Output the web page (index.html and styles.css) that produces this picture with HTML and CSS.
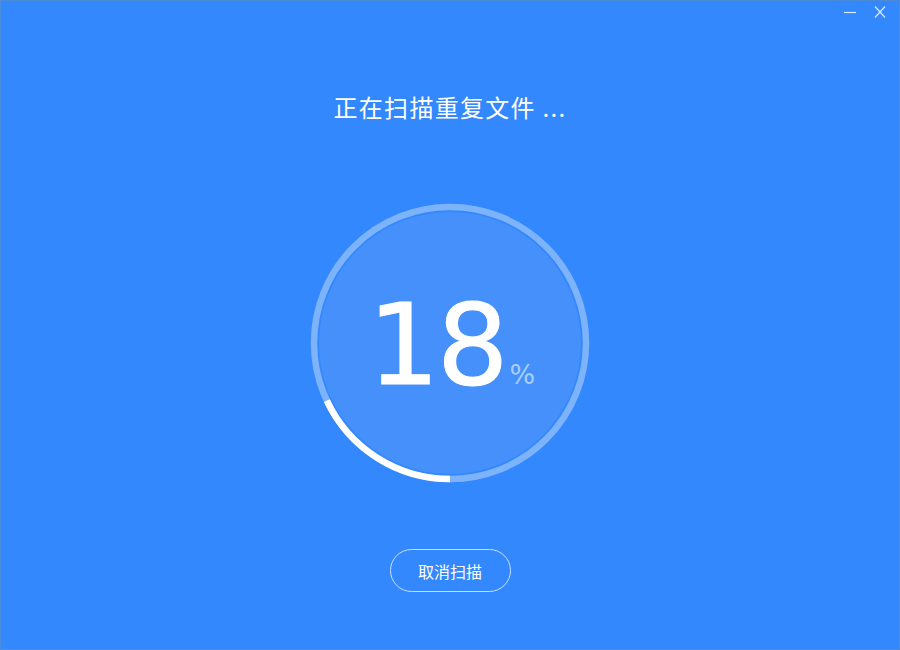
FILE: index.html
```html
<!DOCTYPE html>
<html lang="zh-CN">
<head>
<meta charset="utf-8">
<title>扫描重复文件</title>
<link rel="stylesheet" href="styles.css">
</head>
<body>
<div class="window">
  <div class="titlebar">
    <button class="ctl" aria-label="最小化">
      <svg width="14" height="14" viewBox="0 0 14 14"><line x1="1" y1="7.5" x2="13" y2="7.5" stroke="#d8ecff" stroke-width="1.2"/></svg>
    </button>
    <button class="ctl" aria-label="关闭">
      <svg width="14" height="14" viewBox="0 0 14 14"><path d="M2 1.5 L12 12.5 M12 1.5 L2 12.5" stroke="#d8ecff" stroke-width="1.2" fill="none"/></svg>
    </button>
  </div>
  <h1 class="title">正在扫描重复文件 ...</h1>
  <div class="dial">
    <svg class="ring" width="284" height="284" viewBox="0 0 284 284">
      <circle cx="142" cy="142" r="131" fill="#4590fb"/>
      <circle cx="142" cy="142" r="136" fill="none" stroke="#7cb3fb" stroke-width="6.5"/>
      <circle cx="142" cy="142" r="136" fill="none" stroke="#ffffff" stroke-width="6.5" stroke-dasharray="154 900" transform="rotate(90 142 142)"/>
    </svg>
    <div class="value"><span class="num">18</span><span class="pct">%</span></div>
  </div>
  <button class="cancel">取消扫描</button>
</div>
</body>
</html>
```
FILE: styles.css
```css
html, body {
  margin: 0;
  padding: 0;
}
body {
  width: 900px;
  height: 650px;
  overflow: hidden;
  background: #3388fd;
  font-family: "Noto Sans CJK SC", "Noto Sans", sans-serif;
}
.window {
  box-sizing: border-box;
  width: 900px;
  height: 650px;
  border: 1px solid #4b8fdc;
  border-top-color: #4a8ad6;
  display: flex;
  flex-direction: column;
  align-items: center;
}
.titlebar {
  align-self: stretch;
  display: flex;
  justify-content: flex-end;
  gap: 16px;
  height: 24px;
  padding: 4px 12px 0 0;
  box-sizing: border-box;
}
.ctl {
  border: 0;
  background: none;
  padding: 0;
  width: 14px;
  height: 14px;
  display: flex;
}
.title {
  margin: 66px 0 0;
  height: 32px;
  line-height: 32px;
  font-size: 24px;
  font-weight: normal;
  color: #ffffff;
  letter-spacing: 1.3px;
}
.dial {
  margin-top: 78px;
  width: 284px;
  height: 284px;
  display: grid;
  place-items: center;
}
.ring {
  grid-area: 1 / 1;
}
.value {
  grid-area: 1 / 1;
  position: relative;
  display: flex;
  align-items: baseline;
  margin-left: 3px;
  margin-top: 4px;
}
.num {
  font-family: "DejaVu Sans", sans-serif;
  font-size: 113px;
  line-height: 1;
  color: #ffffff;
  letter-spacing: -3px;
  -webkit-text-stroke: 1px #ffffff;
}
.pct {
  font-family: "DejaVu Sans", sans-serif;
  font-size: 27px;
  color: #a9cffb;
  margin-left: 4px;
}
.cancel {
  margin-top: 64px;
  width: 121px;
  height: 43px;
  border: 1.5px solid #c9e0fd;
  border-radius: 22px;
  background: transparent;
  color: #ffffff;
  font-family: "Noto Sans CJK SC", sans-serif;
  font-size: 16px;
  padding: 0;
}
```
